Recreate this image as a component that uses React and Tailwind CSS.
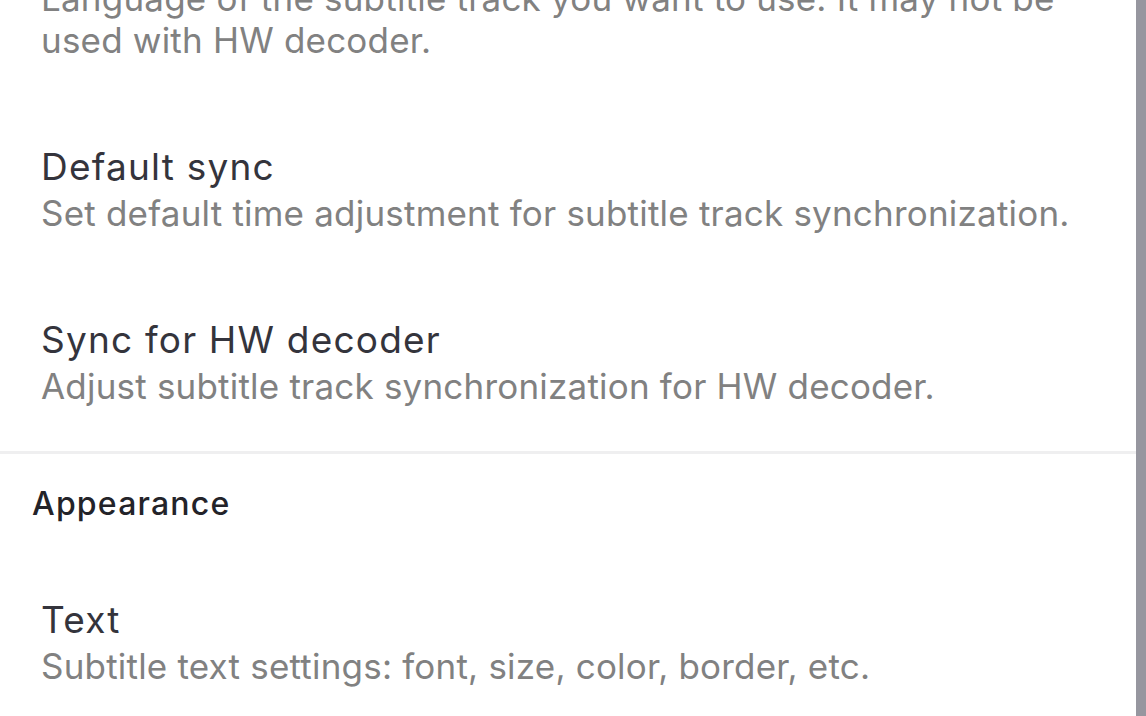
import React from 'react'

const syncItems = [
  {
    title: 'Default sync',
    desc: 'Set default time adjustment for subtitle track synchronization.',
  },
  {
    title: 'Sync for HW decoder',
    desc: 'Adjust subtitle track synchronization for HW decoder.',
  },
]

const PrefItem = ({ title, desc }) => (
  <div className="shrink-0 pl-[41px] pr-4 pt-[39px] pb-[44px]">
    <div className="text-[37px] leading-[46px] tracking-[1.2px] text-[#34343c] whitespace-nowrap">
      {title}
    </div>
    <div className="mt-[2px] text-[35px] leading-[42px] tracking-[0.2px] text-[#818181] whitespace-nowrap">
      {desc}
    </div>
  </div>
)

const App = () => {
  return (
    <div className="flex h-screen w-full overflow-hidden bg-white font-[Inter,sans-serif]">
      <div className="flex-1 flex flex-col">
        {/* previous item, scrolled partly out of view */}
        <div className="shrink-0 pl-[41px] pr-4 -mt-[23px] pb-[44px] text-[35px] leading-[42px] tracking-[0.2px] text-[#818181] whitespace-nowrap">
          <div>Language of the subtitle track you want to use. It may not be</div>
          <div>used with HW decoder.</div>
        </div>

        {syncItems.map((item) => (
          <PrefItem key={item.title} title={item.title} desc={item.desc} />
        ))}

        <div className="shrink-0 h-[3px] bg-[#efeff0]" />

        <div className="shrink-0 pl-[32px] pt-[30px] pb-[34px] text-[32px] leading-[40px] tracking-[1.2px] font-medium text-[#232329]">
          Appearance
        </div>

        <PrefItem
          title="Text"
          desc="Subtitle text settings: font, size, color, border, etc."
        />
      </div>

      {/* scrollbar */}
      <div className="w-[10px] shrink-0 bg-[#96969f]" />
    </div>
  )
}

export default App
